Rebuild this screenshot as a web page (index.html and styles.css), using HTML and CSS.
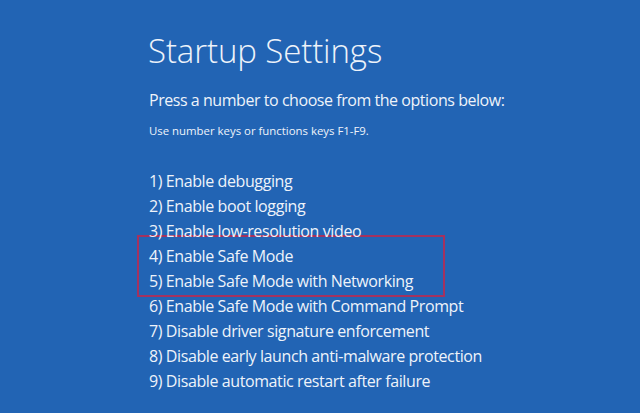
FILE: index.html
```html
<!DOCTYPE html>
<html lang="en">
<head>
<meta charset="utf-8">
<title>Startup Settings</title>
<link rel="stylesheet" href="styles.css">
</head>
<body>
<main class="screen">
  <h1 class="title">Startup Settings</h1>
  <p class="lead">Press a number to choose from the options below:</p>
  <p class="hint">Use number keys or functions keys F1-F9.</p>
  <ol class="options">
    <li>1) Enable debugging</li>
    <li>2) Enable boot logging</li>
    <li>3) Enable low-resolution video</li>
    <li class="boxed">
      <span>4) Enable Safe Mode</span>
      <span>5) Enable Safe Mode with Networking</span>
    </li>
    <li>6) Enable Safe Mode with Command Prompt</li>
    <li>7) Disable driver signature enforcement</li>
    <li>8) Disable early launch anti-malware protection</li>
    <li>9) Disable automatic restart after failure</li>
  </ol>
</main>
</body>
</html>
```
FILE: styles.css
```css
html, body {
  margin: 0;
  padding: 0;
  background: #2264b4;
}
.screen {
  width: 640px;
  height: 413px;
  box-sizing: border-box;
  padding: 31px 0 0 148px;
  color: #eef3fa;
  font-family: "Open Sans", "Noto Sans", sans-serif;
  overflow: hidden;
}
.title {
  margin: 0;
  font-size: 33px;
  font-weight: 300;
  line-height: 40px;
  letter-spacing: -0.1px;
}
.lead {
  margin: 17px 0 0 1px;
  font-size: 16px;
  line-height: 24px;
  letter-spacing: -0.45px;
}
.hint {
  margin: 11px 0 0 1px;
  font-size: 11.4px;
  line-height: 16px;
}
.options {
  list-style: none;
  margin: 30px 0 0 0;
  padding: 0;
  font-size: 16px;
  line-height: 25px;
  letter-spacing: -0.4px;
}
.options li {
  padding-left: 1px;
}
.options .boxed {
  display: flex;
  flex-direction: column;
  box-sizing: border-box;
  width: 308px;
  margin: -9px 0 -3px -11px;
  padding: 7px 0 1px 10px;
  border: 2px solid #a3325f;
}
```
